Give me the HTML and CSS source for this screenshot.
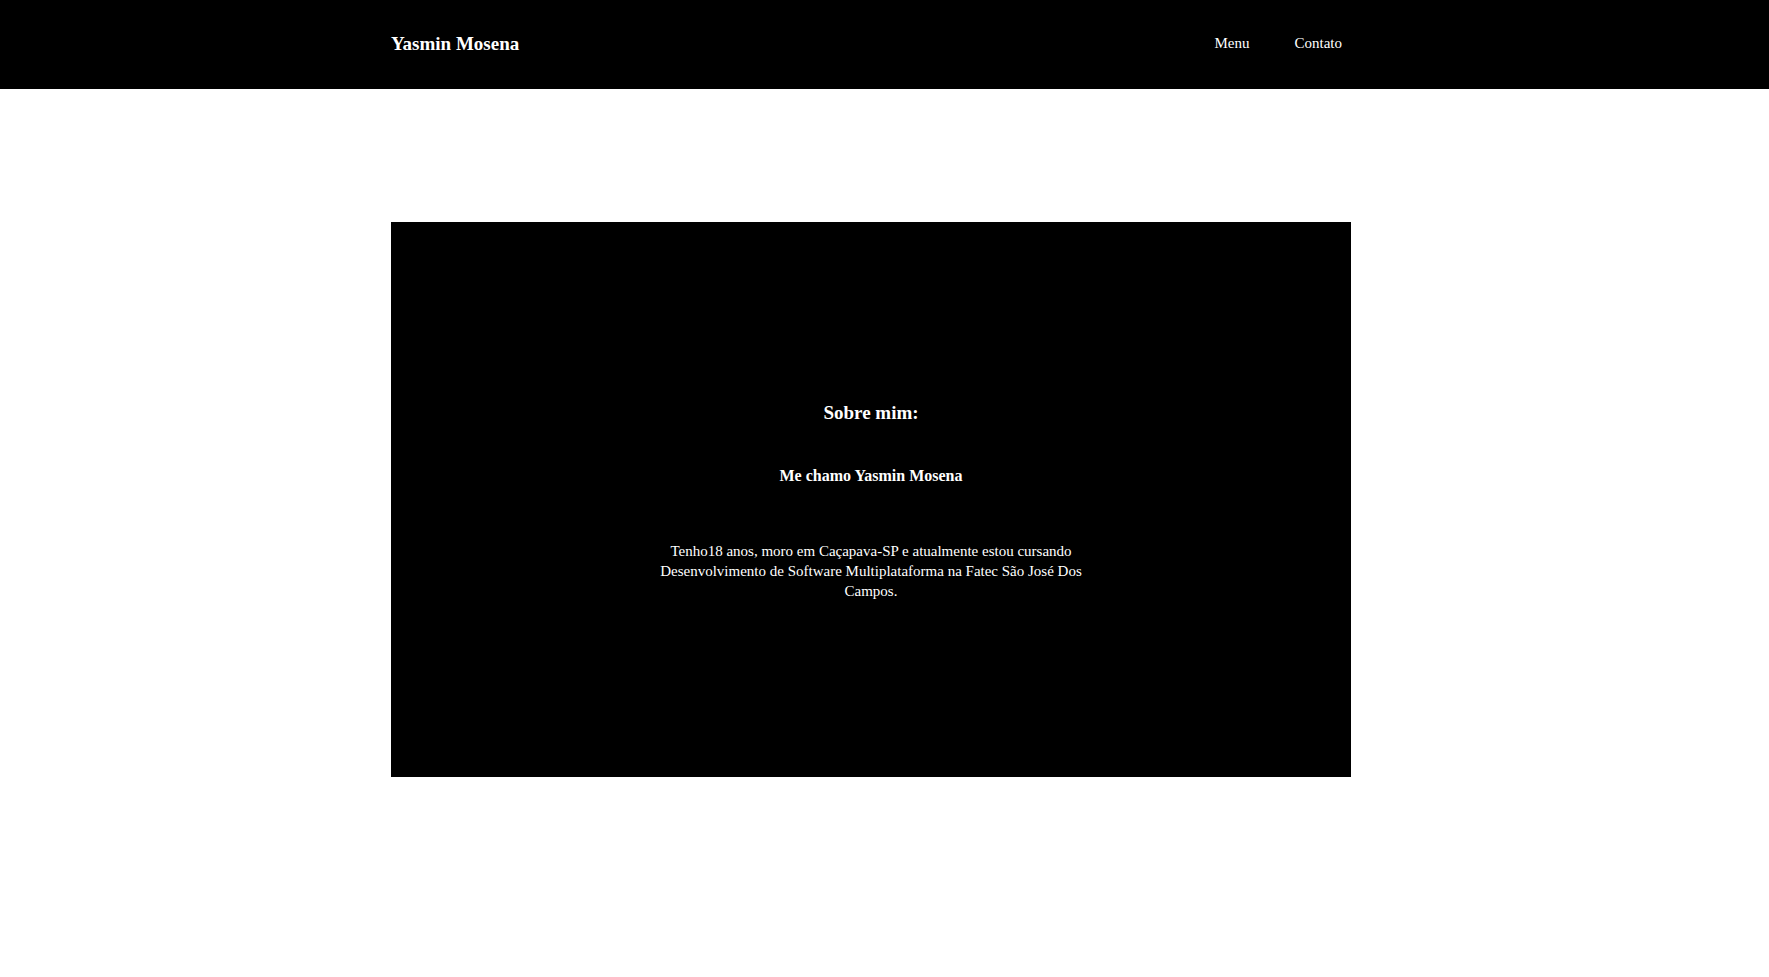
FILE: index.html
```html
<!DOCTYPE html>
<html lang="pt-BR">
<head>
<meta charset="utf-8">
<title>Yasmin Mosena</title>
<link rel="stylesheet" href="styles.css">
</head>
<body>
<header class="topbar">
  <div class="wrap topbar-inner">
    <a class="logo" href="#">Yasmin Mosena</a>
    <nav class="nav">
      <a href="#">Menu</a>
      <a href="#">Contato</a>
    </nav>
  </div>
</header>
<main class="wrap">
  <section class="about">
    <h2 class="about-title">Sobre mim:</h2>
    <h3 class="about-sub">Me chamo Yasmin Mosena</h3>
    <p class="about-text">Tenho18 anos, moro em Caçapava-SP e atualmente estou cursando Desenvolvimento de Software Multiplataforma na Fatec São José Dos Campos.</p>
  </section>
</main>
</body>
</html>
```

FILE: styles.css
```css
* { box-sizing: border-box; }
html, body { margin: 0; padding: 0; }
body {
  background: #fff;
  font-family: "Liberation Serif", "Times New Roman", serif;
  color: #fff;
}
.wrap {
  width: 960px;
  margin-left: 391px;
}
.topbar {
  background: #000;
  height: 89px;
}
.topbar-inner {
  height: 100%;
  display: flex;
  align-items: center;
  justify-content: space-between;
  padding-bottom: 2px;
}
.logo {
  color: #fff;
  text-decoration: none;
  font-weight: bold;
  font-size: 19px;
}
.nav {
  display: flex;
  gap: 45px;
  padding-right: 9px;
}
.nav a {
  color: #fff;
  text-decoration: none;
  font-size: 15px;
}
main.wrap {
  padding-top: 133px;
}
.about {
  background: #000;
  height: 555px;
  padding-top: 3px;
  display: flex;
  flex-direction: column;
  align-items: center;
  justify-content: center;
  text-align: center;
}
.about-title {
  font-size: 19px;
  margin: 0 0 43px;
}
.about-sub {
  font-size: 16px;
  margin: 0 0 56px;
}
.about-text {
  font-size: 15px;
  line-height: 20px;
  width: 450px;
  margin: 0;
}
```
